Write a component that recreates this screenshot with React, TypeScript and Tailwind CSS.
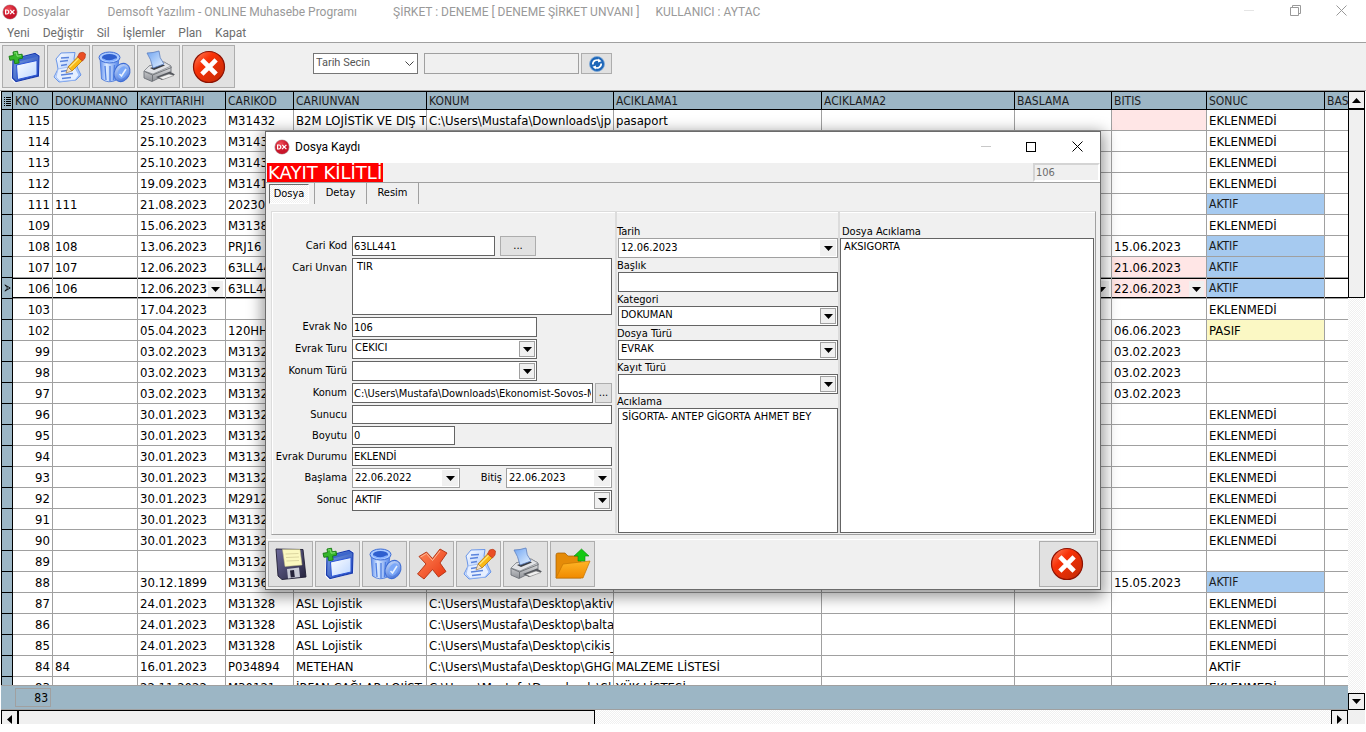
import type { ReactNode } from "react"

type Row = {
  kno: string
  doc?: string
  date?: string
  code?: string
  name?: string
  path?: string
  note?: string
  bitis?: string
  late?: boolean
  sonuc?: string
}

const NONE = "EKLENMEDİ"

const rows: Row[] = [
  { kno: "115", date: "25.10.2023", code: "M31432", name: "B2M LOJİSTİK VE DIŞ T", path: "C:\\Users\\Mustafa\\Downloads\\jp", note: "pasaport", late: true, sonuc: NONE },
  { kno: "114", date: "25.10.2023", code: "M31432", sonuc: NONE },
  { kno: "113", date: "25.10.2023", code: "M31432", sonuc: NONE },
  { kno: "112", date: "19.09.2023", code: "M31412", sonuc: NONE },
  { kno: "111", doc: "111", date: "21.08.2023", code: "202308", sonuc: "AKTIF" },
  { kno: "109", date: "15.06.2023", code: "M31382", sonuc: NONE },
  { kno: "108", doc: "108", date: "13.06.2023", code: "PRJ16", bitis: "15.06.2023", sonuc: "AKTIF" },
  { kno: "107", doc: "107", date: "12.06.2023", code: "63LL441", bitis: "21.06.2023", late: true, sonuc: "AKTIF" },
  { kno: "106", doc: "106", date: "12.06.2023", code: "63LL441", bitis: "22.06.2023", late: true, sonuc: "AKTIF" },
  { kno: "103", date: "17.04.2023", sonuc: NONE },
  { kno: "102", date: "05.04.2023", code: "120HH", bitis: "06.06.2023", sonuc: "PASIF" },
  { kno: "99", date: "03.02.2023", code: "M31328", bitis: "03.02.2023" },
  { kno: "98", date: "03.02.2023", code: "M31328", bitis: "03.02.2023" },
  { kno: "97", date: "03.02.2023", code: "M31328", bitis: "03.02.2023" },
  { kno: "96", date: "30.01.2023", code: "M31328", sonuc: NONE },
  { kno: "95", date: "30.01.2023", code: "M31328", sonuc: NONE },
  { kno: "94", date: "30.01.2023", code: "M31328", sonuc: NONE },
  { kno: "93", date: "30.01.2023", code: "M31328", sonuc: NONE },
  { kno: "92", date: "30.01.2023", code: "M29128", sonuc: NONE },
  { kno: "91", date: "30.01.2023", code: "M31328", sonuc: NONE },
  { kno: "90", date: "30.01.2023", code: "M31328", sonuc: NONE },
  { kno: "89", code: "M31328" },
  { kno: "88", date: "30.12.1899", code: "M31368", bitis: "15.05.2023", sonuc: "AKTIF" },
  { kno: "87", date: "24.01.2023", code: "M31328", name: "ASL Lojistik", path: "C:\\Users\\Mustafa\\Desktop\\aktiv", sonuc: NONE },
  { kno: "86", date: "24.01.2023", code: "M31328", name: "ASL Lojistik", path: "C:\\Users\\Mustafa\\Desktop\\balta", sonuc: NONE },
  { kno: "85", date: "24.01.2023", code: "M31328", name: "ASL Lojistik", path: "C:\\Users\\Mustafa\\Desktop\\cikis_", sonuc: NONE },
  { kno: "84", doc: "84", date: "16.01.2023", code: "P034894", name: "METEHAN", path: "C:\\Users\\Mustafa\\Desktop\\GHGH", note: "MALZEME LİSTESİ", sonuc: "AKTİF" },
  { kno: "83", date: "22.11.2022", code: "M30121", name: "İRFAN ÇAĞLAR LOJİST", path: "C:\\Users\\Mustafa\\Downloads\\Sl", note: "YÜK LİSTESİ", sonuc: NONE },
]

const heads = ["KNO", "DOKUMANNO", "KAYITTARIHI", "CARIKOD", "CARIUNVAN", "KONUM", "ACIKLAMA1", "ACIKLAMA2", "BASLAMA", "BITIS", "SONUC", "BAS"]

const sonucColors: Record<string, string> = {
  AKTIF: "bg-[#a6caf0] text-[12px] text-[#1c1c1c] pt-0",
  PASIF: "bg-[#fbf8c4] pt-0.5",
}

const track = "bg-[repeating-conic-gradient(#ffffff_0_25%,#f0f0f0_0_50%)] bg-[length:2px_2px]"

/* ---------- icons ---------- */

function LogoIcon() {
  return (
    <svg viewBox="0 0 16 16" className="size-4 shrink-0">
      <defs>
        <radialGradient id="logo" cx="40%" cy="30%">
          <stop offset="0" stopColor="#f0505a" />
          <stop offset="1" stopColor="#c9152a" />
        </radialGradient>
      </defs>
      <circle cx="8" cy="8" r="7.6" fill="#b9a9ab" />
      <circle cx="8" cy="8" r="6.9" fill="url(#logo)" />
      <path d="M3.6 6v4h1.2a2 2 0 0 0 0-4zM8.2 5.8l4.2 4.4M12.4 5.8l-4.4 4.4" fill="none" stroke="#fff" strokeWidth="1.2" />
    </svg>
  )
}

function NewIcon() {
  return (
    <svg viewBox="0 0 34 34" className="size-[34px]">
      <defs>
        <linearGradient id="newFrame" x1="0" y1="0" x2="1" y2="1">
          <stop offset="0" stopColor="#7ea4ec" />
          <stop offset="1" stopColor="#1c3fa8" />
        </linearGradient>
        <linearGradient id="newPage" x1="0" y1="0" x2="1" y2="1">
          <stop offset="0" stopColor="#fff" />
          <stop offset="1" stopColor="#bcd6ff" />
        </linearGradient>
      </defs>
      <path d="M5 9 28 2.500 33 5 33 26 8 33 4 29z" fill="#fff" />
      <path d="M6 9 28 3.500 32 6 31.500 26 9 31.500 5.500 28z" fill="url(#newFrame)" stroke="#1b3cae" strokeWidth="1.200" />
      <path d="M7 9.500 28 4.500 31 6.500 10 12z" fill="#3d66cc" />
      <path d="M9.500 15 30 10.500v14.500L10.500 29.500z" fill="url(#newPage)" stroke="#2a55d8" />
      <path d="M6 2l4.500-.8.6 3.600 4-.6.5 4-4 .8.5 4-4.400.7-.5-4-4.300.6L2 6.300l4.500-.8z" fill="#35b52b" stroke="#167a12" strokeWidth=".9" />
      <path d="M7 3l2.500-.3.6 3.500 4-.5" fill="none" stroke="#8be67c" strokeWidth="1" />
    </svg>
  )
}

function EditIcon() {
  return (
    <svg viewBox="0 0 34 34" className="size-[34px]">
      <defs>
        <linearGradient id="editPage" x1="0" y1="0" x2="1" y2="1">
          <stop offset="0" stopColor="#fff" />
          <stop offset="1" stopColor="#8fb6fb" />
        </linearGradient>
      </defs>
      <path d="M9 3 23 2.500 22 9l4 10 3 6-5 5-17 2-5-5 4-8-1-6-1-4z" fill="url(#editPage)" stroke="#6a96e8" strokeWidth="1" />
      <path d="M6 19 22 16l5 9-4 5-15 1.500-4-4.500z" fill="#e6efff" stroke="#8fb2f2" strokeWidth=".7" />
      <path d="M9 8l8-.5M8 11.500l8-1M9 15.500l6-1M9 21.500l6-1M9 25l12-1.500M10 28.500l9-1" stroke="#5b84dd" strokeWidth="1.400" />
      <path d="M16 17 26 6.500l4.500 4L20 21z" fill="#f9b916" stroke="#b97508" strokeWidth=".8" />
      <path d="M17.500 17.500 27.500 7.500" stroke="#ffe680" strokeWidth="1.200" />
      <path d="M16 17l-2 6 6-2z" fill="#f7e2c0" stroke="#9a7340" strokeWidth=".6" />
      <path d="M25.500 7l2-4q4-2 6 1l-.5 4-2.500 3z" fill="#ea4d24" stroke="#b93a18" strokeWidth=".7" />
    </svg>
  )
}

function TrashIcon() {
  return (
    <svg viewBox="0 0 34 34" className="size-[34px]">
      <defs>
        <linearGradient id="bin" x1="0" y1="0" x2="1" y2="0">
          <stop offset="0" stopColor="#5b8bee" />
          <stop offset=".35" stopColor="#dcebff" />
          <stop offset="1" stopColor="#5284ea" />
        </linearGradient>
        <linearGradient id="binLid" x1="0" y1="0" x2="1" y2="1">
          <stop offset="0" stopColor="#d3e5ff" />
          <stop offset="1" stopColor="#3566d4" />
        </linearGradient>
      </defs>
      <path d="M3 8l1.500 21q7 5 15 1l2.500-22z" fill="url(#bin)" stroke="#4473d8" strokeWidth=".8" />
      <path d="M8 16l1 14M13 16v15M17.500 15l-1 15" stroke="#4f7fe2" strokeWidth="1.300" />
      <ellipse cx="12.500" cy="7.500" rx="10.500" ry="5.500" fill="#a9c9ff" stroke="#3b6bd6" />
      <ellipse cx="12.500" cy="7.500" rx="7.500" ry="3.400" fill="#2f5fcf" />
      <path d="M6 9q6 4 13 0" fill="none" stroke="#86b0ff" strokeWidth="1.500" />
      <ellipse cx="25" cy="22.500" rx="7.500" ry="9.500" transform="rotate(28 25 22.500)" fill="url(#binLid)" stroke="#3d6cd4" />
      <ellipse cx="25.500" cy="22.500" rx="4.500" ry="6.500" transform="rotate(28 25.500 22.500)" fill="#7ba8f8" />
      <path d="M22.500 24l2 2 4.500-7" fill="none" stroke="#e7f1ff" strokeWidth="1.600" />
    </svg>
  )
}

function PrintIcon() {
  return (
    <svg viewBox="0 0 34 34" className="size-[34px]">
      <defs>
        <linearGradient id="printPage" x1="0" y1="0" x2="1" y2="1">
          <stop offset="0" stopColor="#6fa4f2" />
          <stop offset="1" stopColor="#e6f2ff" />
        </linearGradient>
        <linearGradient id="printBody" x1="0" y1="0" x2="0" y2="1">
          <stop offset="0" stopColor="#f8f8f8" />
          <stop offset="1" stopColor="#8d9096" />
        </linearGradient>
      </defs>
      <path d="M2 21 7 16 22 12l7 4v6L10 31.500 2 28z" fill="url(#printBody)" stroke="#6e7278" strokeWidth=".9" />
      <path d="M2 21 7 16 22 12l7 4-18 8z" fill="#e2e3e6" stroke="#82868c" strokeWidth=".7" />
      <path d="M8 18 20 14l3 1.500L12 20z" fill="#3a3d43" />
      <path d="M5 3q6 0 12-2 0 7 5 13l-11 4Q9 9 5 3z" fill="url(#printPage)" stroke="#5c7fc0" strokeWidth=".8" />
      <path d="M2.500 21.500l8 3.500 19-7.500M10.500 25v6" fill="none" stroke="#6a6d72" strokeWidth=".9" />
      <path d="M14 27l14-5.500 5 3L20 30z" fill="#55585e" />
      <path d="M17 27.500l10-3.500 5 1.500-11 4z" fill="#f1f1f1" stroke="#777" strokeWidth=".5" />
    </svg>
  )
}

function CloseIcon() {
  return (
    <svg viewBox="0 0 34 34" className="size-[34px]">
      <defs>
        <linearGradient id="closeBall" x1="0" y1="0" x2="1" y2="1">
          <stop offset="0" stopColor="#ff8a66" />
          <stop offset=".35" stopColor="#f83208" />
          <stop offset="1" stopColor="#c02a05" />
        </linearGradient>
      </defs>
      <circle cx="17" cy="17" r="15.500" fill="url(#closeBall)" stroke="#8d1203" strokeWidth="1.200" />
      <path d="M11.500 11.500l11 11M22.500 11.500l-11 11" stroke="#fff" strokeWidth="4.600" strokeLinecap="square" />
    </svg>
  )
}

function SaveIcon() {
  return (
    <svg viewBox="0 0 34 34" className="size-[34px]">
      <defs>
        <linearGradient id="disk" x1="0" y1="0" x2="1" y2="1">
          <stop offset="0" stopColor="#6d6a9c" />
          <stop offset="1" stopColor="#26243c" />
        </linearGradient>
      </defs>
      <path d="M2 2l27 .5 3 27.500-24 2.500L4 29z" fill="url(#disk)" stroke="#1f1d33" strokeWidth=".9" />
      <path d="M8.500 2.500h17.500L28 18l-17 1.500z" fill="#fbf8c0" stroke="#c7c287" strokeWidth=".5" />
      <path d="M11.500 7l13-.5M12 10.500l13-.5M12.500 14l12.500-.5" stroke="#dcd6a0" strokeWidth="1.200" />
      <path d="M13 22l12-1.500 1 9.500-12 1.500z" fill="#c8cad6" />
      <path d="M16 23.500l4-.5.8 7-4 .5z" fill="#25233a" />
    </svg>
  )
}

function CrossIcon() {
  return (
    <svg viewBox="0 0 34 34" className="size-[34px]">
      <defs>
        <linearGradient id="cross" x1="0" y1="0" x2="1" y2="1">
          <stop offset="0" stopColor="#ff8c5c" />
          <stop offset="1" stopColor="#e8330f" />
        </linearGradient>
      </defs>
      <path d="M4 9.500l7.500-4.500 6 6.500L25 2l7 4-7 10 6 8.500-7.500 5.500-6-7.500L9 32l-6.500-5L11 17z" fill="url(#cross)" stroke="#b03010" strokeWidth=".9" strokeLinejoin="round" />
      <path d="M5.500 10l6-3.500 6 7L25 4" fill="none" stroke="#ffb795" strokeWidth="1" />
    </svg>
  )
}

function FolderIcon() {
  return (
    <svg viewBox="0 0 36 34" className="h-[34px] w-9">
      <defs>
        <linearGradient id="folder" x1="0" y1="0" x2="0" y2="1">
          <stop offset="0" stopColor="#ffb526" />
          <stop offset="1" stopColor="#f08a00" />
        </linearGradient>
      </defs>
      <path d="M1 31V8q0-2 2-2h7l3 3h13v22z" fill="#e58b08" stroke="#a35d00" strokeWidth=".7" />
      <path d="M1 31 8 17l27-3-7 17z" fill="url(#folder)" stroke="#c57400" strokeWidth=".7" />
      <path d="M19 9l7.500-7L34 9h-4v5h-7V9z" fill="#14c914" stroke="#0a8a0a" strokeWidth=".6" />
    </svg>
  )
}

function RefreshIcon() {
  return (
    <svg viewBox="0 0 16 16" className="size-4">
      <circle cx="8" cy="8" r="7.500" fill="#1d66b8" stroke="#7fa9d8" strokeWidth=".8" />
      <path d="M3.800 8.500a4.200 4.200 0 0 1 6.700-3.600M12.200 7.500a4.200 4.200 0 0 1-6.700 3.600" fill="none" stroke="#fff" strokeWidth="1.700" />
      <path d="M9.300 2.600l3.200 2.600-3.500 1.400zM6.700 13.400l-3.200-2.600L7 9.400z" fill="#fff" />
    </svg>
  )
}

function Arrow({ dir = "down" }: { dir?: "down" | "up" | "left" | "right" }) {
  const d = {
    down: "M0 2h9L4.500 7z",
    up: "M0 7h9L4.500 2z",
    left: "M7 0v9L2 4.500z",
    right: "M2 0v9l5-4.500z",
  }[dir]
  return (
    <svg viewBox="0 0 9 9" className="size-[9px]">
      <path d={d} fill="#000" />
    </svg>
  )
}

/* ---------- main grid ---------- */

function DropCell({ text }: { text?: string }) {
  return (
    <div className="flex items-center justify-between pr-0.5">
      <span>{text}</span>
      <button aria-label="Takvim" className="grid h-4 w-[15px] place-items-center bg-[#f0f0f0]">
        <Arrow />
      </button>
    </div>
  )
}

function GridRow({ row }: { row: Row }) {
  const active = row.kno === "106"
  const base = `h-[21px] overflow-hidden border-r border-b border-[#a0a0a0] pl-0.5 whitespace-nowrap ${
    active ? "shadow-[inset_0_1px_0_#000,inset_0_-1px_0_#000]" : ""
  }`
  const cell = `${base} pt-0.5`
  return (
    <tr>
      <td className="border-r border-b border-black bg-[#9cb6c5] p-0">
        {active && (
          <svg viewBox="0 0 9 9" className="ml-0.5 size-2">
            <path d="M1 1l6 3.500L1 8M1 1l3 3.500L1 8" fill="none" stroke="#000" />
          </svg>
        )}
      </td>
      <td className={`${cell} pr-0.5 text-right`}>{row.kno}</td>
      <td className={cell}>{row.doc}</td>
      <td className={cell}>{active ? <DropCell text={row.date} /> : row.date}</td>
      <td className={cell}>{row.code}</td>
      <td className={cell}>{row.name}</td>
      <td className={cell}>{row.path}</td>
      <td className={cell}>{row.note}</td>
      <td className={cell}></td>
      <td className={cell}>{active && <DropCell />}</td>
      <td className={`${cell} ${row.late ? "bg-[#ffe6e6]" : ""}`}>{active ? <DropCell text={row.bitis} /> : row.bitis}</td>
      <td className={`${base} ${sonucColors[row.sonuc ?? ""] ?? "pt-0.5"}`}>{row.sonuc}</td>
      <td className={`${cell} border-r-0`}></td>
    </tr>
  )
}

function Grid() {
  return (
    <table className="w-full table-fixed border-separate border-spacing-0 border-l border-black bg-white text-[13px] leading-[18px]">
      <colgroup>
        <col className="w-[11px]" />
        <col className="w-10" />
        <col className="w-[85px]" />
        <col className="w-[88px]" />
        <col className="w-[68px]" />
        <col className="w-[133px]" />
        <col className="w-[187px]" />
        <col className="w-[208px]" />
        <col className="w-[193px]" />
        <col className="w-[97px]" />
        <col className="w-[95px]" />
        <col className="w-[118px]" />
        <col />
      </colgroup>
      <thead>
        <tr className="bg-[#9cb6c5] text-left text-[12px] leading-4 text-[#1c1c1c]">
          <th className="border border-l-0 border-black p-0">
            <svg viewBox="0 0 9 10" className="mx-auto h-2.5 w-[9px]">
              <path d="M1 1.500h1M3 1.500h5M1 3.500h1M3 3.500h5M1 5.500h1M3 5.500h5M1 7.500h1M3 7.500h5M1 9.500h1M3 9.500h5" stroke="#000" />
            </svg>
          </th>
          {heads.map((h) => (
            <th key={h} className="overflow-hidden border border-l-0 border-black pt-px pl-0.5 font-normal whitespace-nowrap last:border-r-0">
              {h}
            </th>
          ))}
        </tr>
      </thead>
      <tbody>
        {rows.map((r) => (
          <GridRow key={r.kno} row={r} />
        ))}
      </tbody>
    </table>
  )
}

function ToolButton({ label, wide, children }: { label: string; wide?: boolean; children: ReactNode }) {
  return (
    <button
      aria-label={label}
      className={`grid h-[43px] place-items-center border border-[#adadad] bg-[#e1e1e1] ${wide ? "w-[53px]" : "w-[43px]"}`}
    >
      {children}
    </button>
  )
}

/* ---------- record dialog ---------- */

const box = "h-full border border-[#646464] bg-white px-px"

function Field({ label, id, height = "h-5", children }: { label: string; id: string; height?: string; children: ReactNode }) {
  return (
    <div className={`flex ${height}`}>
      <label htmlFor={id} className="w-[75px] shrink-0 pt-0.5 text-right">
        {label}
      </label>
      <div className="ml-[5px] flex min-w-0 flex-1">{children}</div>
    </div>
  )
}

function Combo({ id, value, width = "w-full" }: { id: string; value: string; width?: string }) {
  return (
    <div className={`relative h-full ${width}`}>
      <select id={id} className="block h-full w-full appearance-none border border-[#646464] bg-white px-0.5 pb-px">
        <option>{value}</option>
      </select>
      <span className="pointer-events-none absolute top-0.5 right-0.5 bottom-0.5 grid w-4 place-items-center border border-[#a0a0a0] bg-[#f0f0f0]">
        <Arrow />
      </span>
    </div>
  )
}

function DateBox({ id, value, width }: { id: string; value: string; width: string }) {
  return (
    <div className={`flex h-full items-center border border-[#a0a0a0] bg-white pr-px ${width}`}>
      <input id={id} defaultValue={value} className="h-full min-w-0 flex-1 px-0.5 pb-px" />
      <button aria-label="Takvim" className="grid h-4 w-4 place-items-center bg-[#f0f0f0]">
        <Arrow />
      </button>
    </div>
  )
}

function StackField({ label, id, children }: { label: string; id: string; children: ReactNode }) {
  return (
    <div>
      <label htmlFor={id} className="block h-3.5 leading-4">
        {label}
      </label>
      <div className="h-5 pl-px">{children}</div>
    </div>
  )
}

function DialogButton({ label, wide, children }: { label: string; wide?: boolean; children: ReactNode }) {
  return (
    <button
      aria-label={label}
      className={`grid h-[46px] place-items-center border border-[#adadad] bg-[#e1e1e1] ${wide ? "ml-auto w-[59px] pr-1" : "w-[45px]"}`}
    >
      {children}
    </button>
  )
}

function RecordDialog() {
  return (
    <div
      role="dialog"
      aria-label="Dosya Kaydı"
      className="absolute top-[131px] left-[265px] w-[836px] border border-[#6b6b6b] bg-[#f0f0f0] text-[11px] shadow-[0_4px_14px_3px_rgba(0,0,0,0.4)]"
    >
      <div className="flex h-[31px] items-center bg-white pb-0.5 pl-2 font-[Roboto,'Noto_Sans',sans-serif] text-[12px]">
        <LogoIcon />
        <span className="ml-[5px]">Dosya Kaydı</span>
        <div className="ml-auto flex pr-[17px]">
          <button aria-label="Küçült" className="grid size-3 place-items-center">
            <span className="h-px w-2.5 bg-[#c8c8c8]" />
          </button>
          <button aria-label="Büyüt" className="ml-[33px] grid size-3 place-items-center">
            <span className="size-2.5 border border-black" />
          </button>
          <button aria-label="Kapat" className="ml-[34px] grid size-3 place-items-center">
            <svg viewBox="0 0 11 11" className="size-[11px]">
              <path d="M.5.5l10 10M10.500.5l-10 10" stroke="#000" />
            </svg>
          </button>
        </div>
      </div>

      <div className="flex h-5 items-start justify-between border-b border-[#a0a0a0] pl-px">
        <span className="h-[19px] bg-[#ff0000] px-px font-['DejaVu_Sans',sans-serif] text-[18px] leading-[19px] text-white">KAYIT KİLİTLİ</span>
        <input
          aria-label="Kayıt no"
          disabled
          defaultValue="106"
          className="h-[19px] w-[67px] border-2 border-[#d4d4d4] border-r-white border-b-white bg-[#f0f0f0] px-px text-[#6d6d6d]"
        />
      </div>

      <div className="flex h-6 items-start">
        <button className={`ml-[3px] mt-px h-5 w-10 border border-white border-t-[#696969] border-l-[#696969] pt-px ${track}`}>Dosya</button>
        <button className="ml-[5px] h-[21px] w-[53px] border-x border-[#a0a0a0]">Detay</button>
        <button className="h-[21px] w-[52px] border-r border-[#a0a0a0]">Resim</button>
      </div>

      <div className="ml-[5px] mr-1 mt-1 flex h-[324px] border border-[#dcdcdc] border-r-[#a0a0a0] border-b-[#a0a0a0] pb-px shadow-[inset_1px_1px_0_#fff]">
        <div className="flex w-[345px] flex-col gap-0.5 border-r-2 border-[#dcdcdc] pr-[3px] pt-6">
          <Field label="Cari Kod" id="cariKod">
            <input id="cariKod" defaultValue="63LL441" className={`${box} w-[143px]`} />
            <button className="ml-[5px] h-full w-9 border border-[#adadad] bg-[#e1e1e1]">...</button>
          </Field>
          <Field label="Cari Unvan" id="cariUnvan" height="h-[57px]">
            <textarea id="cariUnvan" defaultValue="TIR" className="h-full w-full resize-none border border-[#646464] bg-white px-1" />
          </Field>
          <Field label="Evrak No" id="evrakNo">
            <input id="evrakNo" defaultValue="106" className={`${box} w-[185px]`} />
          </Field>
          <Field label="Evrak Turu" id="evrakTuru">
            <Combo id="evrakTuru" value="CEKICI" width="w-[185px]" />
          </Field>
          <Field label="Konum Türü" id="konumTuru">
            <Combo id="konumTuru" value="" width="w-[185px]" />
          </Field>
          <Field label="Konum" id="konum">
            <input id="konum" defaultValue={"C:\\Users\\Mustafa\\Downloads\\Ekonomist-Sovos-M"} className={`${box} min-w-0 flex-1`} />
            <button className="ml-0.5 h-full w-[17px] border border-[#adadad] bg-[#e1e1e1]">...</button>
          </Field>
          <Field label="Sunucu" id="sunucu" height="h-[19px]">
            <input id="sunucu" className={`${box} w-full`} />
          </Field>
          <Field label="Boyutu" id="boyutu" height="h-[19px]">
            <input id="boyutu" defaultValue="0" className={`${box} w-[103px]`} />
          </Field>
          <Field label="Evrak Durumu" id="durum" height="h-[19px]">
            <input id="durum" defaultValue="EKLENDİ" className={`${box} w-full`} />
          </Field>
          <Field label="Başlama" id="baslama">
            <DateBox id="baslama" value="22.06.2022" width="w-[108px]" />
            <label htmlFor="bitis" className="ml-auto pr-1 pt-0.5">
              Bitiş
            </label>
            <DateBox id="bitis" value="22.06.2023" width="w-[106px]" />
          </Field>
          <Field label="Sonuc" id="sonuc" height="h-[21px]">
            <Combo id="sonuc" value="AKTIF" />
          </Field>
        </div>

        <div className="flex w-[223px] flex-col border-r-2 border-[#dcdcdc] pt-3">
          <StackField label="Tarih" id="tarih">
            <DateBox id="tarih" value="12.06.2023" width="w-full" />
          </StackField>
          <StackField label="Başlık" id="baslik">
            <input id="baslik" className={`${box} w-full`} />
          </StackField>
          <StackField label="Kategori" id="kategori">
            <Combo id="kategori" value="DOKUMAN" />
          </StackField>
          <StackField label="Dosya Türü" id="dosyaTuru">
            <Combo id="dosyaTuru" value="EVRAK" />
          </StackField>
          <StackField label="Kayıt Türü" id="kayitTuru">
            <Combo id="kayitTuru" value="" />
          </StackField>
          <label htmlFor="aciklama" className="block h-3.5 leading-4">
            Acıklama
          </label>
          <textarea id="aciklama" defaultValue="SİGORTA- ANTEP GİGORTA AHMET BEY" className="ml-px flex-1 resize-none border border-[#646464] bg-white px-[3px]" />
        </div>

        <div className="flex min-w-0 flex-1 flex-col pt-3">
          <label htmlFor="dosyaAciklama" className="h-3.5 pl-0.5 leading-4">
            Dosya Acıklama
          </label>
          <textarea id="dosyaAciklama" defaultValue="AKSIGORTA" className="mr-px flex-1 resize-none border border-[#646464] bg-white px-[3px]" />
        </div>
      </div>

      <div className="mt-1 flex gap-0.5 border-t border-white px-0.5 pb-0.5 pt-px">
        <DialogButton label="Kaydet"><SaveIcon /></DialogButton>
        <DialogButton label="Yeni"><NewIcon /></DialogButton>
        <DialogButton label="Sil"><TrashIcon /></DialogButton>
        <DialogButton label="İptal"><CrossIcon /></DialogButton>
        <DialogButton label="Değiştir"><EditIcon /></DialogButton>
        <DialogButton label="Yazdır"><PrintIcon /></DialogButton>
        <DialogButton label="Dosya aç"><FolderIcon /></DialogButton>
        <DialogButton label="Kapat" wide><CloseIcon /></DialogButton>
      </div>
    </div>
  )
}

export default function App() {
  return (
    <div className="relative flex h-screen flex-col overflow-hidden bg-white pb-2 font-['DejaVu_Sans_Condensed','Noto_Sans',sans-serif] text-black">
      <header className="flex h-6 shrink-0 items-center pl-0.5 font-[Roboto,'Noto_Sans',sans-serif] text-[12px] text-[#999]">
        <LogoIcon />
        <span className="ml-[5px]">Dosyalar</span>
        <span className="ml-[38px]">Demsoft Yazılım - ONLINE Muhasebe Programı</span>
        <span className="ml-9">ŞİRKET : DENEME [ DENEME ŞİRKET UNVANI ]</span>
        <span className="ml-4">KULLANICI : AYTAC</span>
        <div className="ml-auto flex items-center gap-[34px] pr-[19px] pb-1">
          <button aria-label="Küçült" className="grid size-3 place-items-center">
            <span className="h-px w-2.5 bg-[#e5e5e5]" />
          </button>
          <button aria-label="Önceki boyut" className="grid size-3 place-items-center">
            <svg viewBox="0 0 11 11" className="size-[11px]">
              <path d="M.5 2.500h8v8h-8zM2.500 2.500v-2h8v8h-2" fill="none" stroke="#999" />
            </svg>
          </button>
          <button aria-label="Kapat" className="grid size-3 place-items-center">
            <svg viewBox="0 0 11 11" className="size-[11px]">
              <path d="M.5.5l10 10M10.500.5l-10 10" stroke="#999" />
            </svg>
          </button>
        </div>
      </header>

      <nav className="flex h-[18px] shrink-0 items-center gap-[13px] pl-[7px] font-[Roboto,'Noto_Sans',sans-serif] text-[12px] text-[#6d6d6d]">
        <button>Yeni</button>
        <button>Değiştir</button>
        <button>Sil</button>
        <button>İşlemler</button>
        <button>Plan</button>
        <button>Kapat</button>
      </nav>

      <div className="flex h-[49px] shrink-0 items-start gap-0.5 border-y border-[#a0a0a0] bg-[#f0f0f0] pl-0.5 pt-0.5">
        <ToolButton label="Yeni"><NewIcon /></ToolButton>
        <ToolButton label="Değiştir"><EditIcon /></ToolButton>
        <ToolButton label="Sil"><TrashIcon /></ToolButton>
        <ToolButton label="Yazdır"><PrintIcon /></ToolButton>
        <ToolButton label="Kapat" wide><CloseIcon /></ToolButton>
        <div className="ml-[76px] mt-2 flex h-[21px] text-[11px]">
          <div className="relative w-[105px]">
            <select
              aria-label="Tarih"
              className="block h-full w-full appearance-none border border-[#767676] bg-white px-0.5 font-[Roboto,'Noto_Sans',sans-serif] text-[11px] text-[#555]"
            >
              <option>Tarih Secin</option>
            </select>
            <svg viewBox="0 0 9 6" className="pointer-events-none absolute top-2 right-1 h-1.5 w-[9px]">
              <path d="M.5.5l4 4 4-4" fill="none" stroke="#444" />
            </svg>
          </div>
          <input aria-label="Ara" disabled className="ml-1.5 w-[155px] border border-[#a0a0a0] bg-[#f0f0f0] px-0.5" />
          <button aria-label="Yenile" className="ml-0.5 grid w-[31px] place-items-center border border-[#adadad] bg-[#e1e1e1]">
            <RefreshIcon />
          </button>
        </div>
      </div>

      <div className="flex min-h-0 flex-1 pl-px">
        <div className="flex min-w-0 flex-1 flex-col">
          <div className="min-h-0 flex-1 overflow-hidden">
            <Grid />
          </div>
          <div className="h-[25px] shrink-0 border-y border-[#a0a0a0] bg-[#9cb6c5] pl-3.5 pt-0.5 text-[12px]">
            <div className="h-[19px] w-9 border border-[#a0a0a0] pr-0.5 text-right leading-[18px]">83</div>
          </div>
          <div className={`flex h-3.5 shrink-0 overflow-hidden ${track}`}>
            <button aria-label="Sola" className="grid w-4 place-items-center border-t border-l border-black bg-[#f0f0f0] pt-1"><Arrow dir="left" /></button>
            <div className="w-[578px] border border-b-0 border-l-2 border-black bg-[#f0f0f0]" />
            <button aria-label="Sağa" className="ml-auto grid w-[17px] place-items-center border border-b-0 border-black bg-[#f0f0f0] pt-1"><Arrow dir="right" /></button>
          </div>
        </div>
        <div className="flex w-[18px] shrink-0 flex-col pr-px">
          <div className={`flex min-h-0 flex-1 flex-col ${track}`}>
            <button aria-label="Yukarı" className="grid h-[17px] place-items-center border border-b-0 border-black bg-[#f0f0f0]"><Arrow dir="up" /></button>
            <div className="h-[190px] border border-t-2 border-black bg-[#f0f0f0]" />
            <button aria-label="Aşağı" className="mt-auto grid h-[17px] place-items-center border border-black bg-[#f0f0f0]"><Arrow /></button>
          </div>
          <div className="h-3.5 bg-[#f0f0f0]" />
        </div>
      </div>

      <RecordDialog />
    </div>
  )
}
